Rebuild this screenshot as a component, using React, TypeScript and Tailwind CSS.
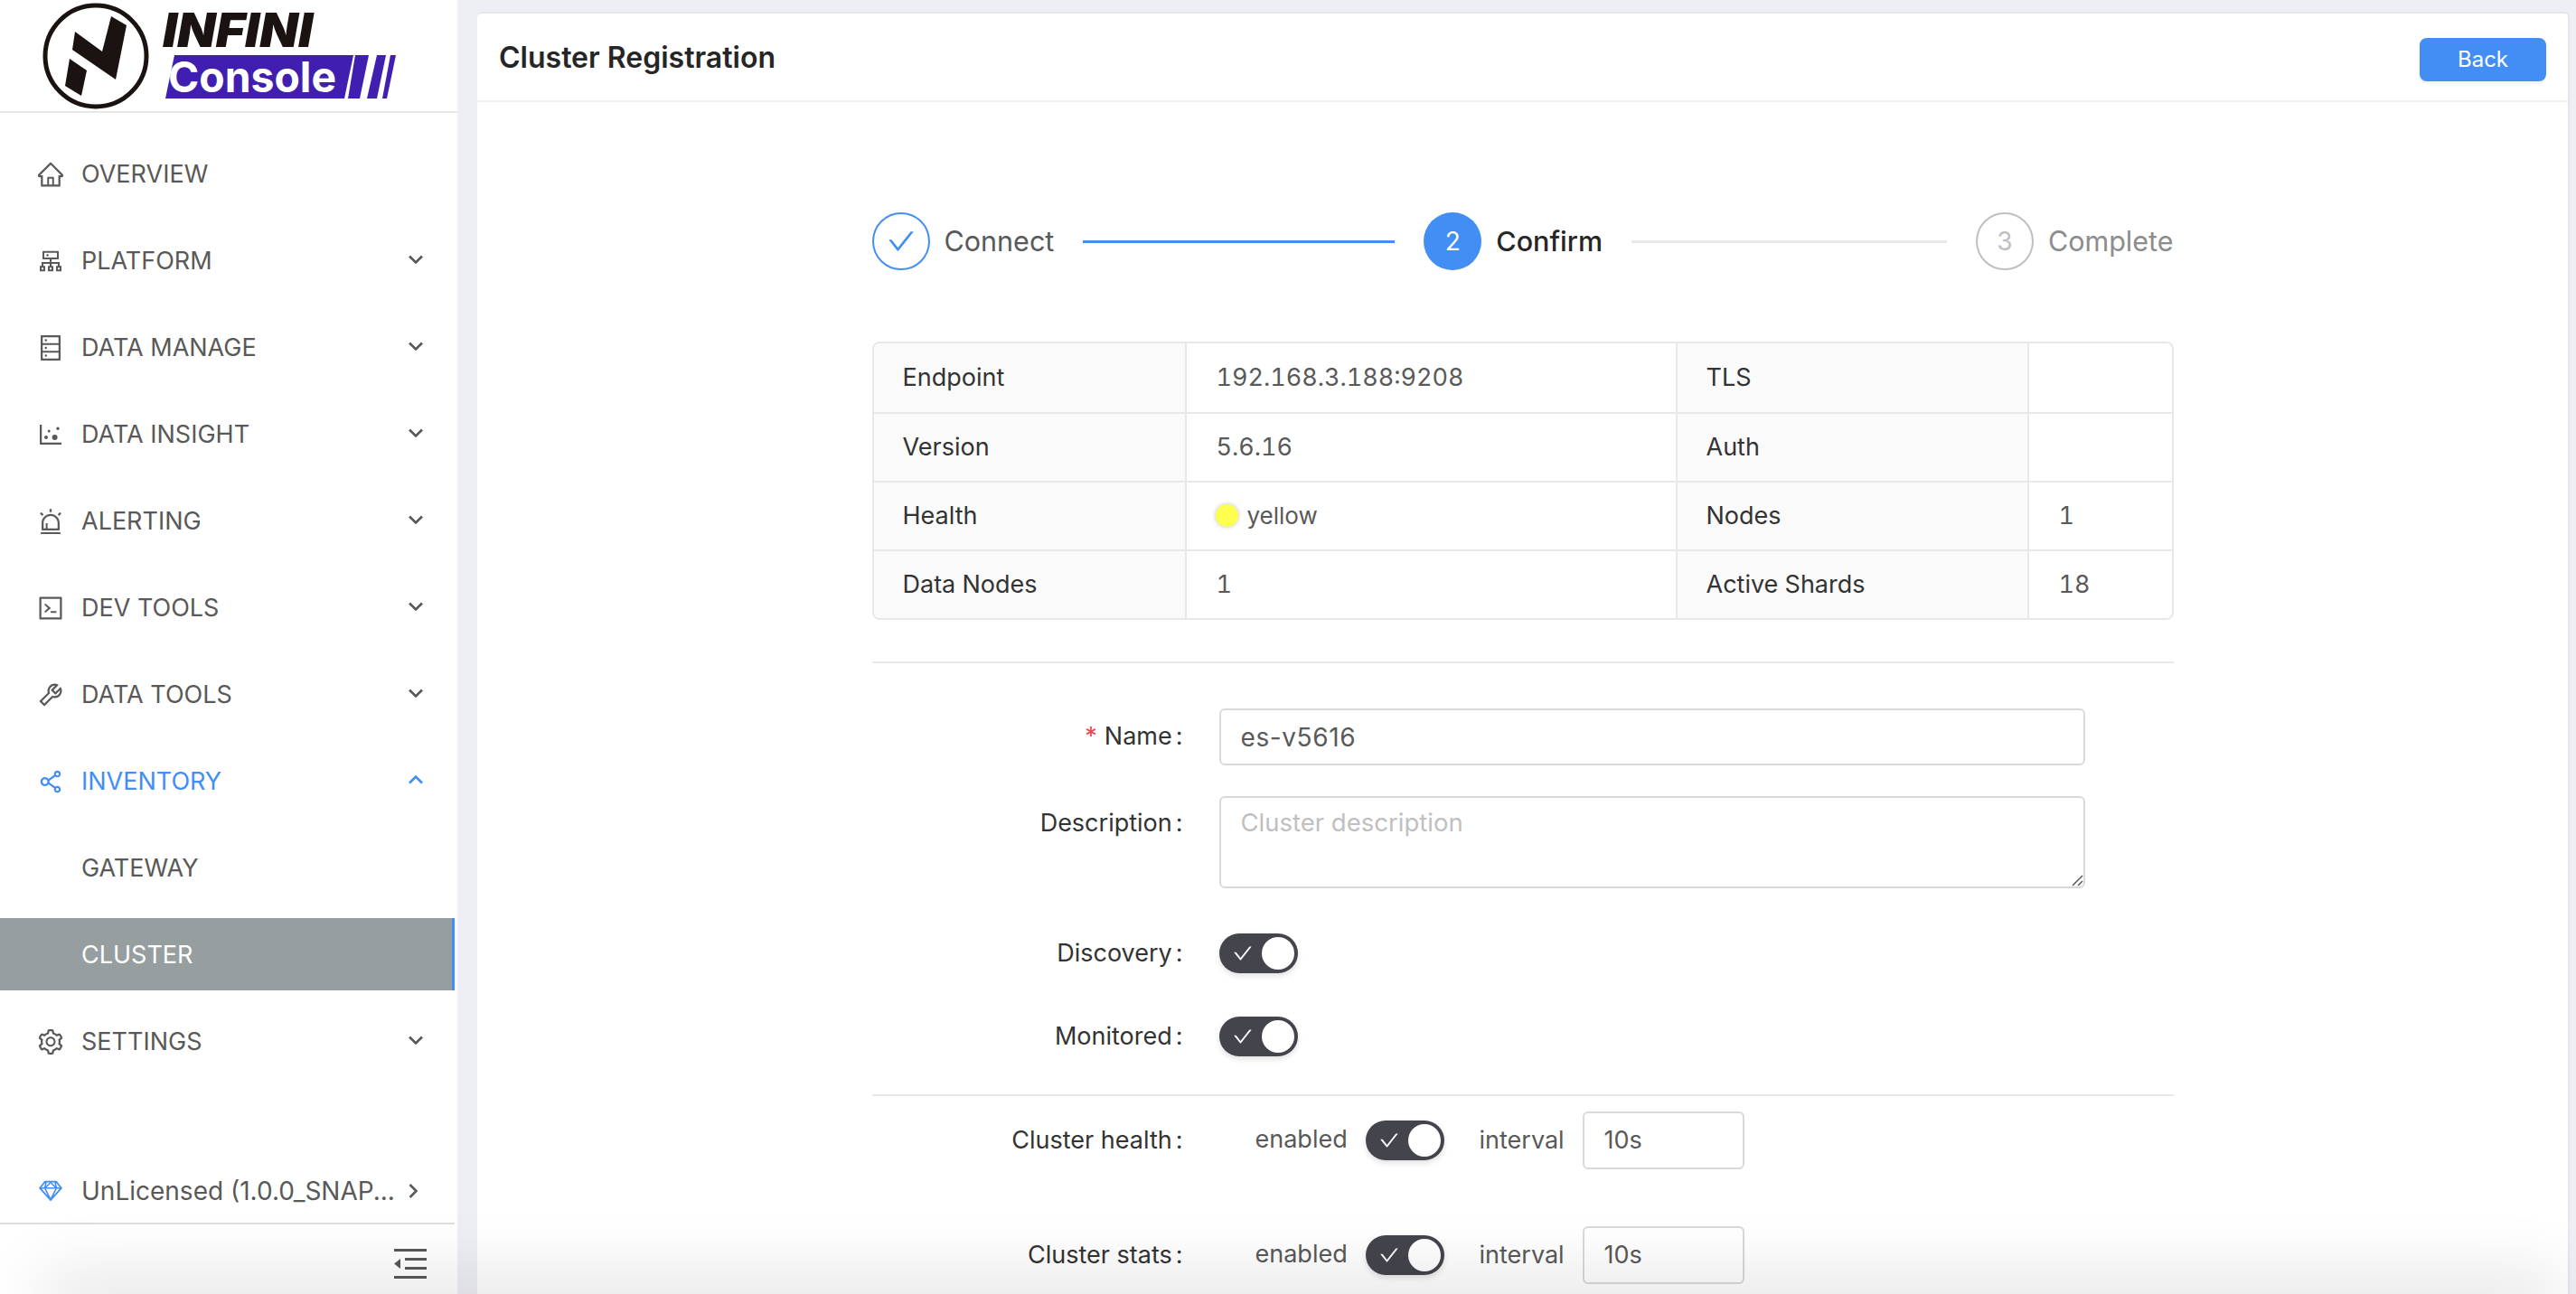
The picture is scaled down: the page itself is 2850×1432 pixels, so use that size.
import type { ComponentType, ReactNode } from "react";
import {
  AiOutlineAlert,
  AiOutlineCheck,
  AiOutlineCluster,
  AiOutlineCode,
  AiOutlineDatabase,
  AiOutlineDotChart,
  AiOutlineHome,
  AiOutlineSetting,
  AiOutlineShareAlt,
  AiOutlineSketch,
  AiOutlineTool,
} from "react-icons/ai";

type MenuItem = {
  label: string;
  icon?: ComponentType<{ size?: number; className?: string }>;
  arrow?: "down" | "up";
  active?: boolean;
  selected?: boolean;
};

const menu: MenuItem[] = [
  { label: "OVERVIEW", icon: AiOutlineHome },
  { label: "PLATFORM", icon: AiOutlineCluster, arrow: "down" },
  { label: "DATA MANAGE", icon: AiOutlineDatabase, arrow: "down" },
  { label: "DATA INSIGHT", icon: AiOutlineDotChart, arrow: "down" },
  { label: "ALERTING", icon: AiOutlineAlert, arrow: "down" },
  { label: "DEV TOOLS", icon: AiOutlineCode, arrow: "down" },
  { label: "DATA TOOLS", icon: AiOutlineTool, arrow: "down" },
  { label: "INVENTORY", icon: AiOutlineShareAlt, arrow: "up", active: true },
  { label: "GATEWAY" },
  { label: "CLUSTER", selected: true },
  { label: "SETTINGS", icon: AiOutlineSetting, arrow: "down" },
];

const tableRows = [
  ["Endpoint", "192.168.3.188:9208", "TLS", ""],
  ["Version", "5.6.16", "Auth", ""],
  ["Health", "yellow", "Nodes", "1"],
  ["Data Nodes", "1", "Active Shards", "18"],
];

function Logo() {
  return (
    <svg width="506" height="124" viewBox="0 0 506 124" className="block">
      <circle cx="106" cy="62" r="56" fill="none" stroke="#1a1311" strokeWidth="5" />
      <polygon points="83,35 113,57 123,18 140,28 128,88 80,55" fill="#1a1311" />
      <polygon points="77,65 96,78 90,106 72,95" fill="#1a1311" />
      <text
        x="180"
        y="52"
        fontFamily="Inter, sans-serif"
        fontSize="52"
        fontWeight="900"
        fontStyle="italic"
        textLength="166"
        lengthAdjust="spacingAndGlyphs"
        fill="#1a1311"
      >
        INFINI
      </text>
      <polygon points="193,61 391,61 381,109 183,109" fill="#3f1eb0" />
      <polygon points="393,61 408,61 398,109 385,109" fill="#3f1eb0" />
      <polygon points="417,61 427,61 417,109 406,109" fill="#3f1eb0" />
      <polygon points="432,61 438,61 428,109 423,109" fill="#3f1eb0" />
      <text
        x="186"
        y="102"
        fontFamily="Inter, sans-serif"
        fontSize="47"
        fontWeight="700"
        textLength="186"
        lengthAdjust="spacingAndGlyphs"
        fill="#ffffff"
      >
        Console
      </text>
    </svg>
  );
}

function OutdentIcon() {
  return (
    <svg width="36" height="33" viewBox="0 0 36 33" fill="currentColor">
      <rect x="0" y="0" width="36" height="3" />
      <rect x="12" y="10" width="24" height="3" />
      <rect x="12" y="20" width="24" height="3" />
      <rect x="0" y="30" width="36" height="3" />
      <polygon points="0,16.5 7,11 7,22" />
    </svg>
  );
}

function Chevron({ up }: { up?: boolean }) {
  return (
    <svg width="16" height="10" viewBox="0 0 16 10" fill="none" className="mr-[35px] -mt-0.5">
      <polyline points={up ? "1,8.5 8,1.5 15,8.5" : "1,1.5 8,8.5 15,1.5"} stroke="currentColor" strokeWidth="2.6" />
    </svg>
  );
}

function Sidebar() {
  return (
    <aside className="flex h-full w-[506px] shrink-0 flex-col bg-white">
      <div className="h-[125px] shrink-0 border-b-2 border-[#e8e8e8]">
        <Logo />
      </div>
      <nav className="flex-1 pt-[27px] pr-[3px]">
        {menu.map((item) => (
          <div
            key={item.label}
            className={`mb-4 flex h-20 items-center text-[27px] ${
              item.selected
                ? "border-r-[3px] border-[#428ef5] bg-[#969ea0] text-white"
                : item.active
                  ? "text-[#428ef5]"
                  : "text-[#595959]"
            }`}
          >
            <span className="mt-0.5 flex w-[90px] shrink-0 pl-[40px]">{item.icon && <item.icon size={32} />}</span>
            <span className="mt-0.5 flex-1">{item.label}</span>
            {item.arrow === "down" && <Chevron />}
            {item.arrow === "up" && <Chevron up />}
          </div>
        ))}
      </nav>
      <div className="mr-[3px] flex h-[62px] items-center border-b-2 border-[#dcdcdc] pb-[11px] text-[#595959]">
        <span className="flex w-[90px] shrink-0 pl-[40px] text-[#428ef5]">
          <AiOutlineSketch size={32} />
        </span>
        <span className="w-[362px] whitespace-nowrap text-[28px]">UnLicensed (1.0.0_SNAP...</span>
        <svg width="11" height="16" viewBox="0 0 11 16" fill="none">
          <polyline points="1.5,1 8.5,8 1.5,15" stroke="currentColor" strokeWidth="2.6" />
        </svg>
      </div>
      <div className="flex h-[77px] justify-end pr-[34px] pt-[27px] text-[#595959]">
        <OutdentIcon />
      </div>
    </aside>
  );
}

function Switch() {
  return (
    <span className="flex h-11 w-[87px] shrink-0 items-center justify-between rounded-full bg-[#44444c] pl-[14px] pr-1 shadow-[0_3px_6px_rgba(0,0,0,0.12)]">
      <AiOutlineCheck size={24} className="text-white" />
      <span className="h-9 w-9 rounded-full bg-white" />
    </span>
  );
}

function Step({
  state,
  num,
  label,
}: {
  state: "done" | "current" | "todo";
  num: number;
  label: string;
}) {
  return (
    <div className="flex shrink-0 items-center gap-4">
      {state === "done" && (
        <span className="flex h-16 w-16 items-center justify-center rounded-full border-2 border-[#428ef5] text-[#428ef5]">
          <AiOutlineCheck size={34} />
        </span>
      )}
      {state === "current" && (
        <span className="flex h-16 w-16 items-center justify-center rounded-full bg-[#428ef5] text-[28px] text-white">
          {num}
        </span>
      )}
      {state === "todo" && (
        <span className="flex h-16 w-16 items-center justify-center rounded-full border-2 border-[#bfbfbf] text-[28px] text-[#bfbfbf]">
          {num}
        </span>
      )}
      <span
        className={`text-[30.5px] ${
          state === "done"
            ? "text-[#595959]"
            : state === "current"
              ? "font-medium text-[#262626]"
              : "text-[#8c8c8c]"
        }`}
      >
        {label}
      </span>
    </div>
  );
}

function InfoTable() {
  return (
    <div className="mt-[79px] overflow-hidden rounded-lg border-2 border-[#e8e8e8] text-[27px] tabular-nums">
      {tableRows.map((row, i) => (
        <div
          key={row[0]}
          className={`grid h-[76px] grid-cols-[344px_543px_389px_1fr] ${i > 0 ? "border-t-2 border-[#e8e8e8]" : ""}`}
        >
          {row.map((cell, j) => (
            <div
              key={j}
              className={`flex items-center ${j > 0 ? "border-l-2 border-[#e8e8e8]" : ""} ${
                j % 2 === 0 ? "bg-[#fafafa] pl-8 text-[#333333]" : "pl-[33px] text-[#595959]"
              }`}
            >
              {cell === "yellow" ? (
                <span className="flex -translate-y-px items-center gap-[9px] text-[26px]">
                  <span className="h-[25px] w-[25px] -translate-x-px rounded-full bg-[#ffff4d] shadow-[0_0_5px_rgba(0,0,0,0.25)]" />
                  yellow
                </span>
              ) : (
                cell
              )}
            </div>
          ))}
        </div>
      ))}
    </div>
  );
}

function FormRow({
  label,
  required,
  alignTop,
  className,
  children,
}: {
  label: string;
  required?: boolean;
  alignTop?: boolean;
  className?: string;
  children: ReactNode;
}) {
  return (
    <div className={`flex ${className ?? ""}`}>
      <label
        className={`flex w-[384px] shrink-0 justify-end pr-[40px] text-[27px] text-[#333333] ${
          alignTop ? "items-start pt-[10px]" : "items-center"
        }`}
      >
        {required && <span className="mr-2 text-[#e5484d]">*</span>}
        {label}
        <span className="ml-1">:</span>
      </label>
      {children}
    </div>
  );
}

function MetricRow({ label, className }: { label: string; className?: string }) {
  return (
    <FormRow label={label} className={className}>
      <div className="flex items-center text-[27px] text-[#595959]">
        <span className="-mt-0.5 ml-[40px] w-[122px]">enabled</span>
        <Switch />
        <span className="ml-[39px] w-[114px]">interval</span>
        <div className="flex h-[64px] w-[179px] items-center rounded-md border-2 border-[#d9d9d9] pl-[22px]">10s</div>
      </div>
    </FormRow>
  );
}

export default function App() {
  return (
    <div className="relative flex h-[1432px] w-[2850px] overflow-hidden bg-[#eeeff4] font-['Inter',sans-serif]">
      <Sidebar />
      <main className="ml-[22px] mt-[13px] w-[2315px]">
        <div className="h-[1500px] rounded-t-md border-t-2 border-r-2 border-[#e6e6e6] bg-white">
          <header className="flex h-[98px] items-center justify-between border-b-2 border-[#f0f0f0] pl-6 pr-6">
            <h1 className="mt-0.5 text-[32px] font-semibold text-[#262626]">Cluster Registration</h1>
            <button className="mt-[6px] h-12 w-[140px] rounded-lg bg-[#428ef5] text-[24px] text-white shadow-[0_3px_0_rgba(0,0,0,0.04)]">
              Back
            </button>
          </header>

          <div className="mx-auto w-[1440px] pt-[122px]">
            {/* Steps */}
            <div className="flex items-center">
              <Step state="done" num={1} label="Connect" />
              <div className="mx-[32px] h-[3px] w-[345px] shrink-0 bg-[#428ef5]" />
              <Step state="current" num={2} label="Confirm" />
              <div className="mx-[32px] h-[3px] flex-1 bg-[#e8e8e8]" />
              <Step state="todo" num={3} label="Complete" />
            </div>

            <InfoTable />
            <div className="mt-[46px] h-0.5 bg-[#e8e8e8]" />

            {/* Form */}
            <FormRow label="Name" required className="mt-[50px]">
              <div className="flex h-[63px] w-[958px] items-center rounded-md border-2 border-[#d9d9d9] pl-[22px] text-[28px] tracking-[0.6px] text-[#595959]">
                es-v5616
              </div>
            </FormRow>
            <FormRow label="Description" alignTop className="mt-[34px]">
              <div className="relative h-[102px] w-[958px] rounded-md border-2 border-[#d9d9d9] pl-[22px] pt-[7px] text-[27.5px] text-[#bfbfbf]">
                Cluster description
                <svg width="14" height="14" viewBox="0 0 14 14" className="absolute bottom-0 right-0 text-[#595959]">
                  <path d="M2 13 L13 2 M8 13 L13 8" stroke="currentColor" strokeWidth="1.5" />
                </svg>
              </div>
            </FormRow>
            <FormRow label="Discovery" className="mt-[50px]">
              <Switch />
            </FormRow>
            <FormRow label="Monitored" className="mt-12">
              <Switch />
            </FormRow>
            <div className="mt-[42px] h-0.5 bg-[#e8e8e8]" />
            <MetricRow label="Cluster health" className="mt-[17px]" />
            <MetricRow label="Cluster stats" className="mt-[63px]" />
          </div>
        </div>
      </main>

      {/* soft shadow rising from the bottom edge of the window */}
      <div className="pointer-events-none absolute left-[70px] right-[40px] top-full h-3 shadow-[0_0_70px_25px_rgba(0,0,0,0.1)]" />
    </div>
  );
}
